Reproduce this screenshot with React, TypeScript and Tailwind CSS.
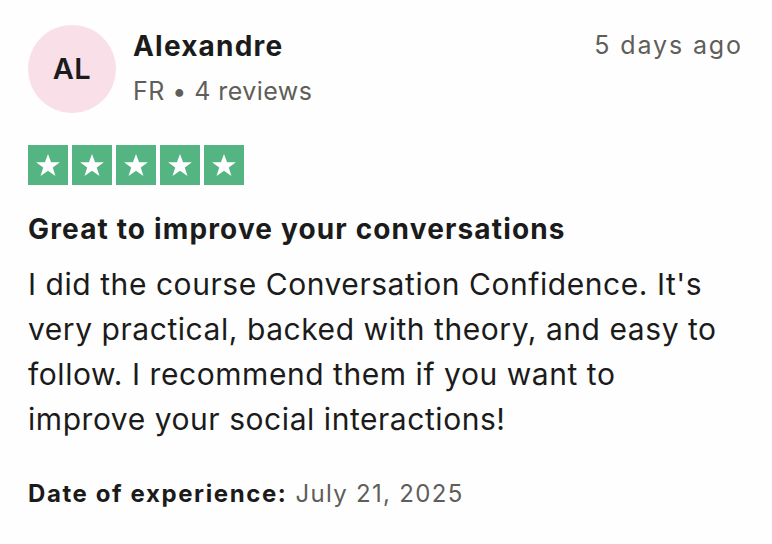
import React from "react";

function Star() {
  return (
    <div className="w-[40px] h-[40px] bg-[#54b582] flex items-center justify-center">
      <svg width="28" height="28" viewBox="0 0 24 24">
        <path d="M12 2.5l2.6 7.1h7.6l-6.1 4.5 2.3 7.4L12 16.9l-6.4 4.6 2.3-7.4-6.1-4.5h7.6z" fill="#fff" />
      </svg>
    </div>
  );
}

export default function App() {
  return (
    <div className="w-[772px] h-[544px] bg-[#fefefe] text-[#1b1b1b] pl-[28px] pr-[29px] pt-[25px]" style={{ fontFamily: "Inter, 'Liberation Sans', sans-serif" }}>
      <div className="flex items-start">
        <div className="w-[88px] h-[88px] rounded-full bg-[#f9dfe8] flex items-center justify-center shrink-0">
          <span className="text-[29px] font-semibold tracking-[0.5px]">AL</span>
        </div>
        <div className="ml-[17px] flex-1 pt-[3px]">
          <div className="text-[28px] font-bold leading-[36px] tracking-[1.2px]">Alexandre</div>
          <div className="text-[25px] leading-[36px] mt-[9px] text-[#5f5e5a] tracking-[0.45px]">FR • 4 reviews</div>
        </div>
        <div className="text-[25px] leading-[36px] text-[#5f5e5a] mt-[2px] tracking-[1.9px]">5 days ago</div>
      </div>
      <div className="flex gap-[4px] mt-[32px]">
        <Star />
        <Star />
        <Star />
        <Star />
        <Star />
      </div>
      <div className="mt-[26px] text-[28px] font-bold leading-[36px] tracking-[1.15px]">Great to improve your conversations</div>
      <div className="mt-[15px] text-[30px] leading-[45px] tracking-[0.55px]">
        I did the course Conversation Confidence. It's
        <br />
        very practical, backed with theory, and easy to
        <br />
        follow. I recommend them if you want to
        <br />
        improve your social interactions!
      </div>
      <div className="mt-[36px] text-[24px] leading-[32px] tracking-[1.3px]">
        <span className="font-bold tracking-[1.6px]">Date of experience:</span> <span className="text-[#5f5e5a]">July 21, 2025</span>
      </div>
    </div>
  );
}
